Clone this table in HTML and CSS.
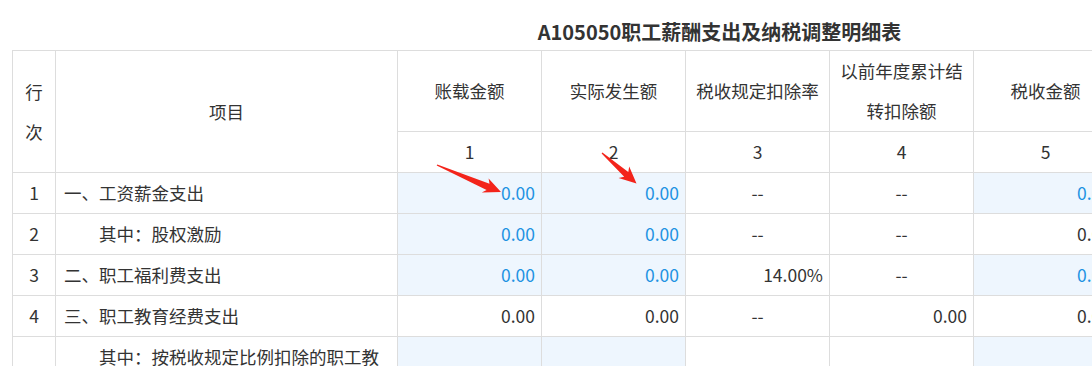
FILE: index.html
```html
<!DOCTYPE html>
<html lang="zh">
<head>
<meta charset="utf-8">
<link rel="stylesheet" href="styles.css">
</head>
<body>
<div class="sheet">
  <h1 class="title">A105050职工薪酬支出及纳税调整明细表</h1>
  <table class="grid">
    <colgroup>
      <col class="c-no"><col class="c-item">
      <col class="c-val"><col class="c-val"><col class="c-val"><col class="c-val"><col class="c-val">
    </colgroup>
    <thead>
      <tr>
        <th rowspan="2" class="h-no">行<br>次</th>
        <th rowspan="2">项目</th>
        <th>账载金额</th>
        <th>实际发生额</th>
        <th>税收规定扣除率</th>
        <th>以前年度累计结转扣除额</th>
        <th>税收金额</th>
      </tr>
      <tr>
        <th>1</th><th>2</th><th>3</th><th>4</th><th>5</th>
      </tr>
    </thead>
    <tbody>
      <tr>
        <td class="no">1</td><td class="item">一、工资薪金支出</td>
        <td class="num in">0.00</td><td class="num in">0.00</td><td class="dash">--</td><td class="dash">--</td>
        <td class="num in">0.00</td>
      </tr>
      <tr>
        <td class="no">2</td><td class="item sub">其中：股权激励</td>
        <td class="num in">0.00</td><td class="num in">0.00</td><td class="dash">--</td><td class="dash">--</td>
        <td class="num">0.00</td>
      </tr>
      <tr>
        <td class="no">3</td><td class="item">二、职工福利费支出</td>
        <td class="num in">0.00</td><td class="num in">0.00</td><td class="num">14.00%</td><td class="dash">--</td>
        <td class="num in">0.00</td>
      </tr>
      <tr>
        <td class="no">4</td><td class="item">三、职工教育经费支出</td>
        <td class="num">0.00</td><td class="num">0.00</td><td class="dash">--</td><td class="num">0.00</td>
        <td class="num">0.00</td>
      </tr>
      <tr>
        <td class="no">5</td><td class="item sub">其中：按税收规定比例扣除的职工教育经费</td>
        <td class="num in">0.00</td><td class="num in">0.00</td><td class="num">8.00%</td><td class="num">0.00</td>
        <td class="num in">0.00</td>
      </tr>
    </tbody>
  </table>
</div>
<svg class="marks" width="1092" height="366" viewBox="0 0 1092 366" aria-hidden="true">
  <polygon fill="#f3241b" points="437.3,164.4 489.5,183.7 488.6,178.6 501,192 481.8,192.4 486.6,190.1 436.7,165.6"/>
  <polygon fill="#f3241b" points="602.4,152.5 628.3,172 629.2,166.6 636.5,183.5 618.6,178 624.2,176.8 601.6,153.5"/>
</svg>
</body>
</html>
```
FILE: styles.css
```css
html, body {
  margin: 0;
  padding: 0;
  overflow: hidden;
  background: #ffffff;
}
body {
  font-family: "Noto Sans CJK SC", "Noto Sans", sans-serif;
  color: #333333;
  position: relative;
  width: 1092px;
  height: 366px;
}
.sheet {
  width: 1415px;
  padding-left: 12px;
}
.title {
  margin: 0 0 4px 0;
  padding-top: 18px;
  line-height: 28px;
  font-size: 20px;
  font-weight: bold;
  text-align: center;
  color: #333333;
}
.grid {
  border-collapse: collapse;
  table-layout: fixed;
  width: 1105px;
  font-size: 17.5px;
}
.c-no { width: 43px; }
.c-item { width: 342px; }
.c-val { width: 144px; }
.grid th,
.grid td {
  border: 1px solid #dddddd;
  padding: 0 6px;
  line-height: 40px;
  font-weight: normal;
  color: #333333;
  vertical-align: middle;
}
.grid th {
  text-align: center;
}
.grid th.h-no {
  padding: 0;
}
.grid td.no {
  text-align: center;
  padding: 0;
}
.grid td.item {
  text-align: left;
  padding-left: 8px;
  padding-right: 8px;
}
.grid td.sub {
  padding-left: 43px;
}
.grid td.num {
  text-align: right;
}
.grid td.dash {
  text-align: center;
}
.grid td.in {
  background: #eef6fe;
  color: #2192e2;
}
.marks {
  position: absolute;
  left: 0;
  top: 0;
  pointer-events: none;
}
```
